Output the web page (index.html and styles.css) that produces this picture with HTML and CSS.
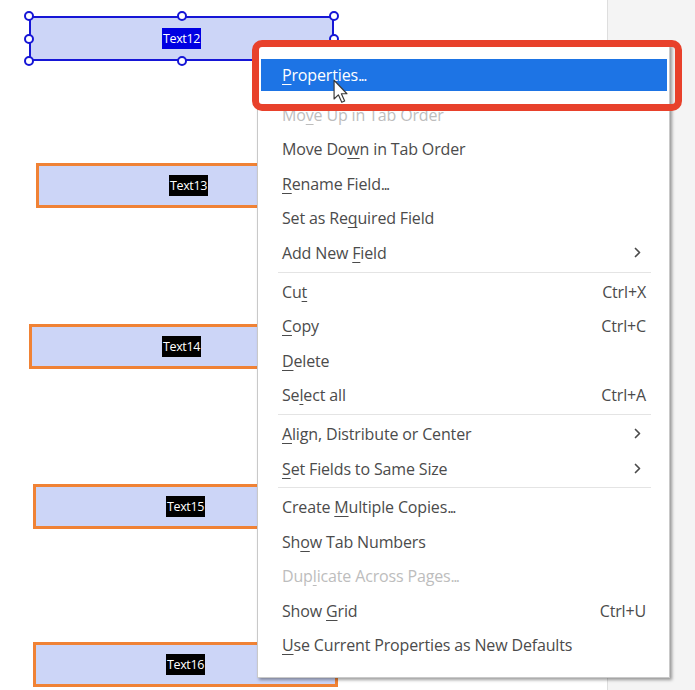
FILE: index.html
```html
<!DOCTYPE html>
<html lang="en">
<head>
<meta charset="utf-8">
<title>Form fields context menu</title>
<link rel="stylesheet" href="styles.css">
</head>
<body>
<div class="screen">
  <div class="canvas">
    <div class="field selected f12">
      <span class="tag tag-blue">Text12</span>
      <span class="h h-tl"></span><span class="h h-tm"></span><span class="h h-tr"></span>
      <span class="h h-ml"></span><span class="h h-mr"></span>
      <span class="h h-bl"></span><span class="h h-bm"></span><span class="h h-br"></span>
    </div>
    <div class="field f13"><span class="tag">Text13</span></div>
    <div class="field f14"><span class="tag">Text14</span></div>
    <div class="field f15"><span class="tag">Text15</span></div>
    <div class="field f16"><span class="tag">Text16</span></div>
  </div>
  <div class="sidebar"></div>

  <div class="menu">
    <div class="item active first"><span class="label"><u>P</u>roperties<span class="dots">...</span></span></div>
    <div class="item disabled"><span class="label">Mo<u>v</u>e Up in Tab Order</span></div>
    <div class="item"><span class="label">Move Do<u>w</u>n in Tab Order</span></div>
    <div class="item"><span class="label"><u>R</u>ename Field<span class="dots">...</span></span></div>
    <div class="item"><span class="label">Set as Re<u>q</u>uired Field</span></div>
    <div class="item"><span class="label">Add New <u>F</u>ield</span>
      <svg class="chev" viewBox="0 0 7 11"><polyline points="1.5,1.5 5.5,5.5 1.5,9.5"/></svg></div>
    <div class="sep"></div>
    <div class="item"><span class="label">Cu<u>t</u></span><span class="key">Ctrl+X</span></div>
    <div class="item"><span class="label"><u>C</u>opy</span><span class="key">Ctrl+C</span></div>
    <div class="item"><span class="label"><u>D</u>elete</span></div>
    <div class="item"><span class="label">Se<u>l</u>ect all</span><span class="key">Ctrl+A</span></div>
    <div class="sep"></div>
    <div class="item"><span class="label"><u>A</u>lign, Distribute or Center</span>
      <svg class="chev" viewBox="0 0 7 11"><polyline points="1.5,1.5 5.5,5.5 1.5,9.5"/></svg></div>
    <div class="item"><span class="label"><u>S</u>et Fields to Same Size</span>
      <svg class="chev" viewBox="0 0 7 11"><polyline points="1.5,1.5 5.5,5.5 1.5,9.5"/></svg></div>
    <div class="sep"></div>
    <div class="item"><span class="label">Create <u>M</u>ultiple Copies<span class="dots">...</span></span></div>
    <div class="item"><span class="label">Sh<u>o</u>w Tab Numbers</span></div>
    <div class="item disabled"><span class="label">Dup<u>l</u>icate Across Pages<span class="dots">...</span></span></div>
    <div class="item"><span class="label">Show <u>G</u>rid</span><span class="key">Ctrl+U</span></div>
    <div class="item"><span class="label"><u>U</u>se Current Properties as New Defaults</span></div>
  </div>

  <div class="callout"></div>

  <svg class="cursor" viewBox="0 0 14 23">
    <path d="M1,1 L1,18.5 L5,14.6 L8.2,21.6 L10.9,20.4 L7.8,13.6 L13,13.6 Z"/>
  </svg>
</div>
</body>
</html>
```

FILE: styles.css
```css
html, body {
  margin: 0;
  padding: 0;
}

body {
  font-family: "Open Sans", "Noto Sans", "Liberation Sans", sans-serif;
  background: #ffffff;
}

.screen {
  position: relative;
  width: 695px;
  height: 690px;
  display: flex;
  overflow: hidden;
}

.canvas {
  position: relative;
  width: 607px;
  height: 690px;
  background: #ffffff;
  border-right: 1px solid #dedede;
}

.sidebar {
  flex: 1;
  background: #f4f4f4;
}

/* form fields on the PDF page */
.field {
  position: absolute;
  box-sizing: border-box;
  width: 305px;
  height: 45px;
  background: #ccd5f7;
  border: 3px solid #f08235;
  display: flex;
  align-items: center;
  justify-content: center;
}

.field.selected {
  border: 2px solid #1616d6;
}

.f12 { left: 29px; top: 16px; }
.f13 { left: 36px; top: 163px; }
.f14 { left: 29px; top: 324px; }
.f15 { left: 33px; top: 484px; }
.f16 { left: 33px; top: 642px; }

.tag {
  background: #000000;
  color: #ffffff;
  font-size: 12.5px;
  line-height: 21px;
  padding: 0 1.5px;
  letter-spacing: -0.4px;
}

.tag-blue {
  background: #0000e2;
}

.h {
  position: absolute;
  width: 10px;
  height: 10px;
  box-sizing: border-box;
  border: 2px solid #1616d6;
  border-radius: 50%;
  background: #ffffff;
}

.h-tl, .h-tm, .h-tr { top: -7px; }
.h-ml, .h-mr { top: calc(50% - 5px); }
.h-bl, .h-bm, .h-br { bottom: -7px; }
.h-tl, .h-ml, .h-bl { left: -7px; }
.h-tm, .h-bm { left: calc(50% - 5px); }
.h-tr, .h-mr, .h-br { right: -7px; }

/* context menu */
.menu {
  position: absolute;
  left: 257px;
  top: 44px;
  width: 413px;
  box-sizing: border-box;
  padding: 12.7px 0 14px;
  background: #ffffff;
  border: 1px solid #c9c9c9;
  box-shadow: 2px 2px 3px rgba(0, 0, 0, 0.38);
}

.item {
  box-sizing: border-box;
  height: 34.6px;
  display: flex;
  align-items: center;
  justify-content: space-between;
  padding: 0 23px 0 24px;
  font-size: 16px;
  letter-spacing: -0.15px;
  color: #4b4b4b;
  white-space: nowrap;
}

.item u {
  text-decoration: underline;
  text-decoration-thickness: 1px;
  text-underline-offset: 3px;
}

.dots {
  letter-spacing: -1.6px;
}

.item.first {
  margin-bottom: 5px;
}

.item.active {
  background: #1d74e5;
  background-clip: padding-box;
  border-style: solid;
  border-color: transparent;
  border-width: 1.3px 2px 1.3px 3px;
  padding: 0 21px 0 21px;
  color: #ffffff;
}

.item.disabled {
  color: #bdbdbd;
}

.key {
  color: #4b4b4b;
}

.chev {
  width: 7px;
  height: 11px;
  margin-right: 5px;
  fill: none;
  stroke: #4b4b4b;
  stroke-width: 1.7;
  stroke-linecap: round;
  stroke-linejoin: round;
}

.sep {
  height: 1px;
  margin: 1.5px 18px 1.5px 20px;
  background: #e4e4e4;
}

/* red annotation box */
.callout {
  position: absolute;
  left: 252px;
  top: 40px;
  width: 430px;
  height: 71px;
  box-sizing: border-box;
  border: 7px solid #e8412b;
  border-radius: 10px;
}

/* mouse pointer */
.cursor {
  position: absolute;
  left: 333px;
  top: 79px;
  width: 15px;
  height: 25px;
  fill: #ffffff;
  stroke: #3a3a3a;
  stroke-width: 1.1;
  stroke-linejoin: round;
}
```
